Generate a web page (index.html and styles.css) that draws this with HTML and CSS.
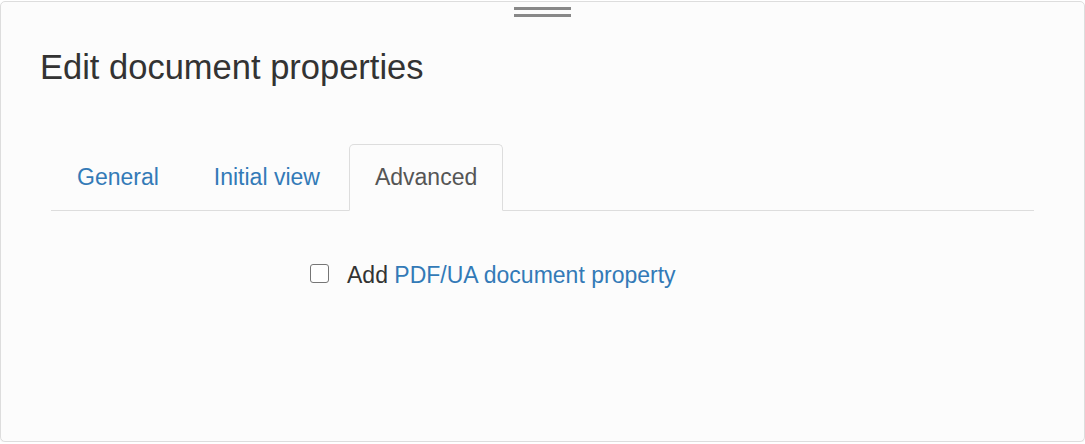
FILE: index.html
```html
<!DOCTYPE html>
<html>
<head>
<meta charset="utf-8">
<link rel="stylesheet" href="styles.css">
</head>
<body>
<div class="panel">
  <div class="handle"><span></span><span></span></div>
  <h3 class="title">Edit document properties</h3>
  <div class="tabs">
    <a class="tab">General</a>
    <a class="tab">Initial view</a>
    <a class="tab active">Advanced</a>
  </div>
  <div class="content">
    <label class="check-row">
      <span class="box"></span>
      <span class="label-text">Add <a class="link">PDF/UA document property</a></span>
    </label>
  </div>
</div>
</body>
</html>
```

FILE: styles.css
```css
html, body {
  margin: 0;
  padding: 0;
  background: #ffffff;
}
body {
  font-family: "Liberation Sans", Arial, sans-serif;
  color: #333333;
}
.panel {
  margin-top: 1px;
  height: 439px;
  width: 1083px;
  border: 1px solid #dddddd;
  border-radius: 5px;
  background: #fcfcfc;
  box-shadow: 0 1px 1px rgba(0,0,0,0.05);
  display: flex;
  flex-direction: column;
}
.handle {
  align-self: flex-start;
  margin-left: 513px;
  margin-top: 5px;
  display: flex;
  flex-direction: column;
  gap: 4px;
}
.handle span {
  display: block;
  width: 57px;
  height: 3px;
  background: #888888;
}
.title {
  margin: 30px 0 0 39px;
  font-size: 34.5px;
  font-weight: normal;
  line-height: 40px;
  color: #333333;
}
.tabs {
  margin: 57px 50px 0 50px;
  display: flex;
  border-bottom: 1px solid #dddddd;
  height: 66px;
}
.tab {
  display: flex;
  align-items: center;
  padding: 0 25px;
  margin-right: 3px;
  margin-bottom: -1px;
  font-size: 23px;
  color: #337ab7;
  border: 1px solid transparent;
  border-radius: 5px 5px 0 0;
}
.tab.active {
  color: #555555;
  background: #fcfcfc;
  border-color: #dddddd;
  border-bottom-color: #fcfcfc;
}
.content {
  padding: 51px 0 0 309px;
}
.check-row {
  display: flex;
  align-items: center;
  gap: 18px;
  font-size: 23px;
  color: #333333;
}
.box {
  width: 17px;
  height: 17px;
  border: 1.5px solid #767676;
  border-radius: 3px;
  background: #ffffff;
  position: relative;
  top: -2px;
}
.link {
  color: #337ab7;
}
```
